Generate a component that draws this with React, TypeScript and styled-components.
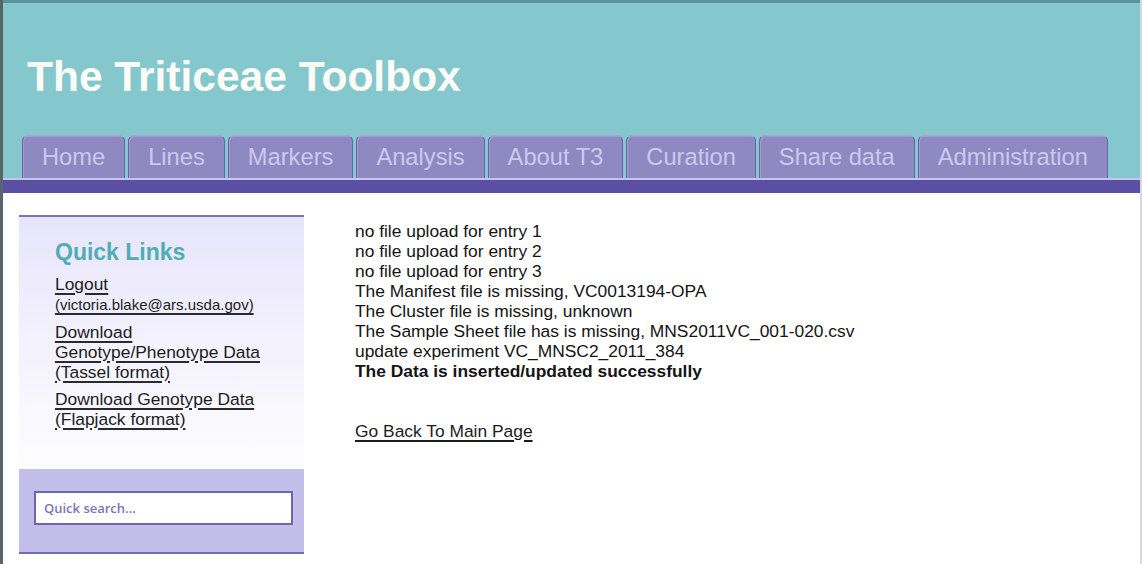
import styled, { createGlobalStyle } from 'styled-components';

const GlobalStyle = createGlobalStyle`
  html, body {
    margin: 0;
    padding: 0;
    background: #ffffff;
  }
  body {
    font-family: "Liberation Sans", Arial, sans-serif;
  }
`;

const Page = styled.div({
  minHeight: 564,
  boxSizing: 'border-box',
  borderLeft: '3px solid #56666b',
  borderRight: '2px solid #d6dada',
  background: '#ffffff',
});

const Header = styled.header({
  display: 'flex',
  flexDirection: 'column',
  height: 175,
  background: '#84c8cd',
  borderTop: '3px solid #5f9298',
});

const Title = styled.h1({
  margin: 0,
  padding: '50px 0 0 24px',
  fontFamily: '"Liberation Sans", Arial, sans-serif',
  fontSize: 42.5,
  lineHeight: '48px',
  fontWeight: 700,
  color: '#fbfdf6',
});

const TabRow = styled.nav({
  display: 'flex',
  alignItems: 'flex-end',
  gap: 3,
  marginTop: 'auto',
  paddingLeft: 19,
});

const Tab = styled.a({
  display: 'flex',
  alignItems: 'center',
  justifyContent: 'center',
  boxSizing: 'border-box',
  height: 43,
  padding: '0 19px',
  background: '#8f89c1',
  border: '1px solid #6a60ad',
  borderBottom: 'none',
  borderTopColor: '#a9a4d6',
  borderRadius: '6px 6px 0 0',
  boxShadow: 'inset 1px 1px 0 #a19bcf',
  fontSize: 23.7,
  color: '#cdc8ef',
  textDecoration: 'none',
  cursor: 'pointer',
});

const NavBar = styled.div({
  height: 13,
  background: '#5b4fa3',
  borderTop: '2px solid #c9c4ec',
});

const Body = styled.div({
  display: 'flex',
  alignItems: 'flex-start',
  gap: 51,
  padding: '22px 0 0 16px',
});

const Sidebar = styled.aside({
  width: 285,
  flexShrink: 0,
  borderTop: '2px solid #7a71b7',
  borderBottom: '2px solid #716ab2',
});

const LinksPanel = styled.div({
  height: 252,
  boxSizing: 'border-box',
  padding: '21px 0 0 36px',
  background: 'linear-gradient(to bottom, #e7e5fb 0%, #f4f3fd 55%, #fdfdff 100%)',
});

const Heading = styled.h2({
  margin: '0 0 8px',
  fontSize: 23,
  lineHeight: '28px',
  fontWeight: 700,
  color: '#4fadb4',
});

const LinkList = styled.ul({
  listStyle: 'none',
  margin: 0,
  padding: 0,
  display: 'flex',
  flexDirection: 'column',
  gap: 7,
});

const SideLink = styled.a({
  fontSize: 17.4,
  lineHeight: '20px',
  color: '#1c1c22',
  textDecoration: 'underline',
  textDecorationThickness: 2,
  textUnderlineOffset: 3,
  textDecorationColor: '#2a2a33',
});

const Small = styled.span({
  fontSize: 15,
});

const SearchPanel = styled.div({
  height: 83,
  boxSizing: 'border-box',
  padding: '22px 11px 0 15px',
  background: '#c3bdea',
});

const SearchInput = styled.input({
  display: 'block',
  width: '100%',
  height: 34,
  boxSizing: 'border-box',
  margin: 0,
  padding: '0 8px',
  border: '2px solid #6f64ad',
  background: '#ffffff',
  fontFamily: '"Open Sans", "Noto Sans", sans-serif',
  fontSize: 13,
  fontWeight: 600,
  color: '#4a4290',
  outline: 'none',
  '&::placeholder': {
    color: '#7d73b9',
    opacity: 1,
  },
});

const Main = styled.main({
  marginTop: 6,
  fontSize: 17.4,
  lineHeight: '20px',
  color: '#141414',
});

const Message = styled.div<{ $strong?: boolean }>((props) => ({
  fontWeight: props.$strong ? 700 : 400,
}));

const BackLink = styled.a({
  display: 'inline-block',
  marginTop: 40,
  color: '#1c1c1c',
  textDecoration: 'underline',
  textDecorationThickness: 2,
  textUnderlineOffset: 3,
});

const tabs = ['Home', 'Lines', 'Markers', 'Analysis', 'About T3', 'Curation', 'Share data', 'Administration'];

const messages = [
  'no file upload for entry 1',
  'no file upload for entry 2',
  'no file upload for entry 3',
  'The Manifest file is missing, VC0013194-OPA',
  'The Cluster file is missing, unknown',
  'The Sample Sheet file has is missing, MNS2011VC_001-020.csv',
  'update experiment VC_MNSC2_2011_384',
];

function App() {
  return (
    <>
      <GlobalStyle />
      <Page>
        <Header>
          <Title>The Triticeae Toolbox</Title>
          <TabRow>
            {tabs.map((tab) => (
              <Tab key={tab}>{tab}</Tab>
            ))}
          </TabRow>
        </Header>
        <NavBar />
        <Body>
          <Sidebar>
            <LinksPanel>
              <Heading>Quick Links</Heading>
              <LinkList>
                <li>
                  <SideLink>Logout</SideLink>
                  <br />
                  <SideLink>
                    <Small>(victoria.blake@ars.usda.gov)</Small>
                  </SideLink>
                </li>
                <li>
                  <SideLink>
                    Download
                    <br />
                    Genotype/Phenotype Data
                    <br />
                    (Tassel format)
                  </SideLink>
                </li>
                <li>
                  <SideLink>
                    Download Genotype Data
                    <br />
                    (Flapjack format)
                  </SideLink>
                </li>
              </LinkList>
            </LinksPanel>
            <SearchPanel>
              <SearchInput placeholder="Quick search..." />
            </SearchPanel>
          </Sidebar>
          <Main>
            {messages.map((msg) => (
              <Message key={msg}>{msg}</Message>
            ))}
            <Message $strong>The Data is inserted/updated successfully</Message>
            <BackLink>Go Back To Main Page</BackLink>
          </Main>
        </Body>
      </Page>
    </>
  );
}

export default App;
